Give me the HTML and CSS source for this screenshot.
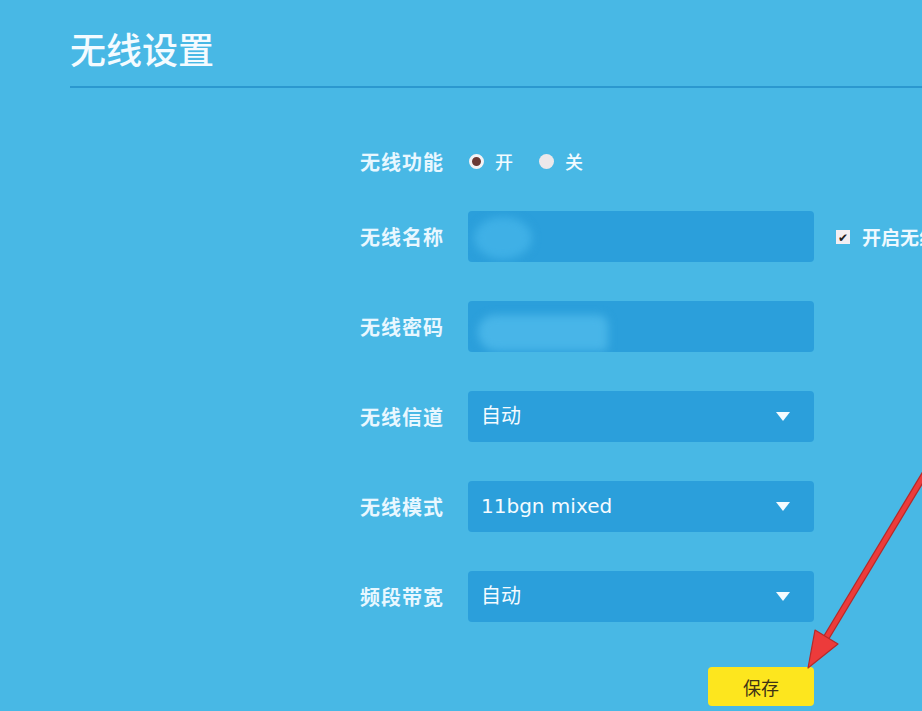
FILE: index.html
```html
<!DOCTYPE html>
<html lang="zh-CN">
<head>
  <meta charset="UTF-8">
  <title>无线设置</title>
  <link rel="stylesheet" href="styles.css">
</head>
<body>

  <div class="header">
    <h1>无线设置</h1>
  </div>

  <div class="form">
    <div class="row radio-row">
      <span class="label">无线功能</span>
      <span class="radios">
        <span class="radio checked"></span><span class="opt">开</span>
        <span class="radio"></span><span class="opt">关</span>
      </span>
    </div>

    <div class="row">
      <span class="label">无线名称</span>
      <div class="field"><span class="blur blur-name"></span></div>
      <span class="check"><span class="box">&#10004;</span>开启无线广播</span>
    </div>

    <div class="row">
      <span class="label">无线密码</span>
      <div class="field"><span class="blur blur-pass"></span></div>
    </div>

    <div class="row">
      <span class="label">无线信道</span>
      <div class="field select">自动<span class="arrow"></span></div>
    </div>

    <div class="row">
      <span class="label">无线模式</span>
      <div class="field select">11bgn mixed<span class="arrow"></span></div>
    </div>

    <div class="row">
      <span class="label">频段带宽</span>
      <div class="field select">自动<span class="arrow"></span></div>
    </div>

    <div class="actions">
      <button class="save">保存</button>
    </div>
  </div>

  <svg class="pointer" width="922" height="711" viewBox="0 0 922 711">
    <line x1="926" y1="472" x2="823" y2="643" stroke="#b52a2a" stroke-width="7" stroke-linecap="round"/>
    <line x1="926" y1="472" x2="823" y2="643" stroke="#ec3b3b" stroke-width="4.5" stroke-linecap="round"/>
    <polygon points="808,668 815,630 838,644" fill="#ec3b3b" stroke="#b52a2a" stroke-width="1.2" stroke-linejoin="round"/>
  </svg>

</body>
</html>
```

FILE: styles.css
```css
body {
  margin: 0;
  width: 922px;
  height: 711px;
  overflow: hidden;
  position: relative;
  background: #48b8e5;
  font-family: "Noto Sans CJK SC", "DejaVu Sans", sans-serif;
  color: #eef9ff;
}

.header {
  margin-left: 70px;
  padding-top: 28px;
  padding-bottom: 18px;
  border-bottom: 2px solid #2b98cf;
}

.header h1 {
  margin: 0;
  font-size: 36px;
  line-height: 40px;
  font-weight: 500;
  color: #f4fbff;
}

.form {
  margin-top: 58px;
}

.row {
  display: flex;
  align-items: center;
  height: 51px;
  margin-bottom: 39px;
}

.radio-row {
  height: 30px;
  margin-bottom: 35px;
}

.label {
  flex-shrink: 0;
  width: 104px;
  margin-left: 340px;
  text-align: right;
  font-size: 20px;
  font-weight: 700;
  letter-spacing: 1px;
  color: #e8f7ff;
}

.radios {
  display: flex;
  align-items: center;
  margin-left: 25px;
}

.radio {
  width: 15px;
  height: 15px;
  border-radius: 50%;
  background: #ece8ea;
  box-sizing: border-box;
}

.radio.checked {
  background: #6a3a36;
  border: 3px solid #f4f2f4;
}

.opt {
  font-size: 18px;
  font-weight: 500;
  margin-left: 11px;
  margin-right: 26px;
  color: #f2fbff;
}

.field {
  flex-shrink: 0;
  position: relative;
  overflow: hidden;
  box-sizing: border-box;
  width: 346px;
  height: 51px;
  margin-left: 24px;
  padding-left: 13px;
  border-radius: 4px;
  background: #2b9fdb;
  font-family: "DejaVu Sans", "Noto Sans CJK SC", sans-serif;
  font-size: 20px;
  line-height: 51px;
  color: #f4fbff;
}

.arrow {
  position: absolute;
  right: 24px;
  top: 21px;
  width: 0;
  height: 0;
  border-left: 7px solid transparent;
  border-right: 7px solid transparent;
  border-top: 9px solid #f4fbff;
}

.blur {
  position: absolute;
  background: #3fb0e6;
  filter: blur(4px);
}

.blur-name {
  left: 6px;
  top: 6px;
  width: 58px;
  height: 42px;
  border-radius: 50%;
}

.blur-pass {
  left: 10px;
  top: 14px;
  width: 130px;
  height: 36px;
  border-radius: 18px 10px 6px 20px;
  background: #48b5e8;
}

.check {
  display: flex;
  align-items: center;
  margin-left: 22px;
  font-size: 19px;
  font-weight: 700;
  white-space: nowrap;
  color: #eef9ff;
}

.check .box {
  flex-shrink: 0;
  width: 14px;
  height: 14px;
  margin-right: 12px;
  background: #f4eef2;
  color: #222;
  font-size: 12px;
  line-height: 14px;
  text-align: center;
}

.actions {
  margin-left: 708px;
  padding-top: 6px;
}

.save {
  width: 106px;
  height: 39px;
  border: 0;
  border-radius: 4px;
  background: #fde61e;
  color: #3e3216;
  font-family: "Noto Sans CJK SC", sans-serif;
  font-size: 18px;
  padding: 0;
}

.pointer {
  position: absolute;
  left: 0;
  top: 0;
  pointer-events: none;
}
```
